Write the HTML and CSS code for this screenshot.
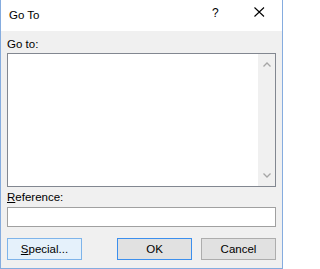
FILE: index.html
```html
<!DOCTYPE html>
<html>
<head>
<meta charset="utf-8">
<link rel="stylesheet" href="styles.css">
</head>
<body>
<div class="window">
  <div class="titlebar">
    <span class="title">Go To</span>
    <span class="help">?</span>
    <span class="close">
      <svg width="11" height="10" viewBox="0 0 11 10"><path d="M0.5 0.5 L10 9.5 M10 0.5 L0.5 9.5" stroke="#000" stroke-width="1.1" fill="none"/></svg>
    </span>
  </div>
  <div class="content">
    <div class="label label-top">Go to:</div>
    <div class="listbox">
      <div class="list-area"></div>
      <div class="scrollbar">
        <svg width="8" height="5" viewBox="0 0 8 5"><path d="M0.5 4.5 L4 1 L7.5 4.5" stroke="#a6a6a6" stroke-width="1.3" fill="none"/></svg>
        <svg width="8" height="5" viewBox="0 0 8 5"><path d="M0.5 0.5 L4 4 L7.5 0.5" stroke="#a6a6a6" stroke-width="1.3" fill="none"/></svg>
      </div>
    </div>
    <div class="label label-ref"><u>R</u>eference:</div>
    <div class="input"></div>
    <div class="buttons">
      <div class="btn btn-hover"><span><u>S</u>pecial...</span></div>
      <div class="btn-group">
        <div class="btn btn-default">OK</div>
        <div class="btn">Cancel</div>
      </div>
    </div>
  </div>
</div>
</body>
</html>
```

FILE: styles.css
```css
html, body {
  margin: 0;
  padding: 0;
}
body {
  width: 283px;
  height: 269px;
  overflow: hidden;
  font-family: "Liberation Sans", Arial, sans-serif;
  font-size: 11.5px;
  color: #000;
}
.window {
  box-sizing: border-box;
  width: 283px;
  height: 269px;
  border-left: 1px solid #85acdf;
  border-right: 1px solid #85acdf;
  border-bottom: 1px solid #85acdf;
  background: #f0f0f0;
  display: flex;
  flex-direction: column;
}
.titlebar {
  height: 31px;
  background: #fff;
  display: flex;
  align-items: flex-start;
  flex-shrink: 0;
}
.title {
  margin-left: 8px;
  margin-top: 9px;
  font-size: 11.5px;
  line-height: 13px;
}
.help {
  margin-left: auto;
  margin-top: 7px;
  font-size: 12px;
  line-height: 13px;
  width: 7px;
}
.close {
  margin-left: 35px;
  margin-right: 17px;
  margin-top: 7px;
  display: flex;
}
.content {
  padding: 5px 6px 0 6px;
  display: flex;
  flex-direction: column;
}
.label-top {
  height: 17px;
  line-height: 17px;
}
.label-ref {
  height: 20px;
  line-height: 21px;
}
.listbox {
  box-sizing: border-box;
  height: 134px;
  border: 1px solid #828790;
  background: #fff;
  display: flex;
}
.list-area {
  flex: 1;
}
.scrollbar {
  width: 17px;
  background: #f0f0f0;
  display: flex;
  flex-direction: column;
  justify-content: space-between;
  align-items: center;
  padding: 8px 0 8px 0;
}
.scrollbar svg {
  display: block;
}
.input {
  box-sizing: border-box;
  height: 20px;
  border: 1px solid #a0a0a0;
  background: #fff;
}
.buttons {
  margin-top: 11px;
  display: flex;
  justify-content: space-between;
}
.btn-group {
  display: flex;
  gap: 9px;
}
.btn {
  box-sizing: border-box;
  width: 75px;
  height: 22px;
  border: 1px solid #adadad;
  background: #e1e1e1;
  display: flex;
  align-items: center;
  justify-content: center;
  font-size: 11.5px;
}
.btn-hover {
  background: #e5f1fb;
  border-color: #7eb4ea;
}
.btn-default {
  border-color: #3c8fed;
}
u {
  text-decoration: underline;
  text-underline-offset: 1px;
}
```
